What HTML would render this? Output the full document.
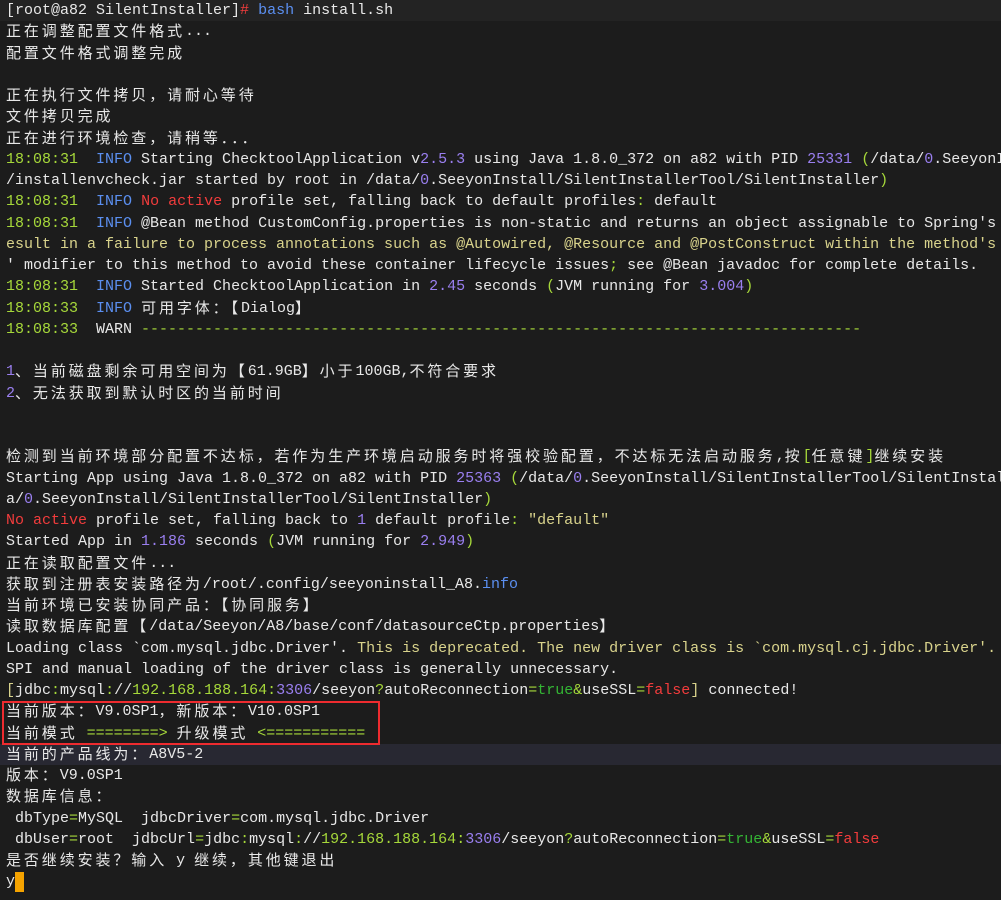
<!DOCTYPE html>
<html><head><meta charset="utf-8"><style>
html,body{margin:0;padding:0;background:#1c1c1c;width:1001px;height:900px;overflow:hidden}
#t{position:absolute;left:0;top:0;width:1001px;font-family:"Liberation Mono","Noto Sans CJK SC",monospace;font-size:15px;color:#e8e8e8}
.l{height:21.25px;line-height:21.25px;white-space:pre;padding-left:6px;overflow:hidden}
i{font-style:normal;letter-spacing:2.9px;font-family:"Noto Sans CJK SC","WenQuanYi Zen Hei",sans-serif;font-size:15px;line-height:1;vertical-align:baseline;position:relative;top:1px}
.g{color:#a6d83a}.b{color:#5b8ff0}.r{color:#f23c3c}.y{color:#d9d38c}.p{color:#9a7ff0}.gr{color:#34b534}
.hl{background:#282832}
.top{background:#232323}
#box{position:absolute;left:2px;top:701px;width:374px;height:40px;border:2px solid #ee2b2f}
#cur{position:absolute;left:15px;top:872px;width:9px;height:20px;background:#f5a300}
</style></head><body>
<div id="t">
<div class="l top">[root@a82 SilentInstaller]<span class="r">#</span> <span class="b">bash</span> install.sh</div>
<div class="l"><i>正在调整配置文件格式</i>...</div>
<div class="l"><i>配置文件格式调整完成</i></div>
<div class="l"> </div>
<div class="l"><i>正在执行文件拷贝，请耐心等待</i></div>
<div class="l"><i>文件拷贝完成</i></div>
<div class="l"><i>正在进行环境检查，请稍等．．．</i></div>
<div class="l"><span class="g">18:08:31</span>  <span class="b">INFO</span> Starting ChecktoolApplication v<span class="p">2.5.3</span> using Java 1.8.0_372 on a82 with PID <span class="p">25331</span> <span class="g">(</span>/data/<span class="p">0</span>.SeeyonInstall/SilentInstallerTool</div>
<div class="l">/installenvcheck.jar started by root in /data/<span class="p">0</span>.SeeyonInstall/SilentInstallerTool/SilentInstaller<span class="g">)</span></div>
<div class="l"><span class="g">18:08:31</span>  <span class="b">INFO</span> <span class="r">No active</span> profile set, falling back to default profiles<span class="g">:</span> default</div>
<div class="l"><span class="g">18:08:31</span>  <span class="b">INFO</span> @Bean method CustomConfig.properties is non-static and returns an object assignable to Spring's</div>
<div class="l y">esult in a failure to process annotations such as @Autowired, @Resource and @PostConstruct within the method's</div>
<div class="l">' modifier to this method to avoid these container lifecycle issues<span class="g">;</span> see @Bean javadoc for complete details.</div>
<div class="l"><span class="g">18:08:31</span>  <span class="b">INFO</span> Started ChecktoolApplication in <span class="p">2.45</span> seconds <span class="g">(</span>JVM running for <span class="p">3.004</span><span class="g">)</span></div>
<div class="l"><span class="g">18:08:33</span>  <span class="b">INFO</span> <i>可用字体：【</i>Dialog<i>】</i></div>
<div class="l"><span class="g">18:08:33</span>  WARN <span class="g">--------------------------------------------------------------------------------</span></div>
<div class="l"> </div>
<div class="l"><span class="p">1</span><i>、当前磁盘剩余可用空间为【</i>61.9GB<i>】小于</i>100GB,<i>不符合要求</i></div>
<div class="l"><span class="p">2</span><i>、无法获取到默认时区的当前时间</i></div>
<div class="l"> </div>
<div class="l"> </div>
<div class="l"><i>检测到当前环境部分配置不达标，若作为生产环境启动服务时将强校验配置，不达标无法启动服务</i>,<i>按</i><span class="g">[</span><i>任意键</i><span class="g">]</span><i>继续安装</i></div>
<div class="l">Starting App using Java 1.8.0_372 on a82 with PID <span class="p">25363</span> <span class="g">(</span>/data/<span class="p">0</span>.SeeyonInstall/SilentInstallerTool/SilentInstal</div>
<div class="l">a/<span class="p">0</span>.SeeyonInstall/SilentInstallerTool/SilentInstaller<span class="g">)</span></div>
<div class="l"><span class="r">No active</span> profile set, falling back to <span class="p">1</span> default profile<span class="g">:</span> <span class="y">"default"</span></div>
<div class="l">Started App in <span class="p">1.186</span> seconds <span class="g">(</span>JVM running for <span class="p">2.949</span><span class="g">)</span></div>
<div class="l"><i>正在读取配置文件</i>...</div>
<div class="l"><i>获取到注册表安装路径为</i>/root/.config/seeyoninstall_A8.<span class="b">info</span></div>
<div class="l"><i>当前环境已安装协同产品：【协同服务】</i></div>
<div class="l"><i>读取数据库配置【</i>/data/Seeyon/A8/base/conf/datasourceCtp.properties<i>】</i></div>
<div class="l">Loading class `com.mysql.jdbc.Driver'. <span class="y">This is deprecated. The new driver class is `com.mysql.cj.jdbc.Driver'.</span></div>
<div class="l">SPI and manual loading of the driver class is generally unnecessary.</div>
<div class="l"><span class="y">[</span>jdbc<span class="g">:</span>mysql<span class="g">:</span>//<span class="g">192.168.188.164</span><span class="g">:</span><span class="p">3306</span>/seeyon<span class="g">?</span>autoReconnection<span class="g">=</span><span class="gr">true</span><span class="g">&amp;</span>useSSL<span class="g">=</span><span class="r">false</span><span class="y">]</span> connected!</div>
<div class="l"><i>当前版本：</i>V9.0SP1<i>，新版本：</i>V10.0SP1</div>
<div class="l"><i>当前模式</i> <span class="g">========&gt;</span> <i>升级模式</i> <span class="g">&lt;===========</span></div>
<div class="l hl"><i>当前的产品线为：</i>A8V5-2</div>
<div class="l"><i>版本：</i>V9.0SP1</div>
<div class="l"><i>数据库信息：</i></div>
<div class="l"> dbType<span class="g">=</span>MySQL  jdbcDriver<span class="g">=</span>com.mysql.jdbc.Driver</div>
<div class="l"> dbUser<span class="g">=</span>root  jdbcUrl<span class="g">=</span>jdbc<span class="g">:</span>mysql<span class="g">:</span>//<span class="g">192.168.188.164</span><span class="g">:</span><span class="p">3306</span>/seeyon<span class="g">?</span>autoReconnection<span class="g">=</span><span class="gr">true</span><span class="g">&amp;</span>useSSL<span class="g">=</span><span class="r">false</span></div>
<div class="l"><i>是否继续安装？输入</i> y <i>继续，其他键退出</i></div>
<div class="l">y</div>
</div>
<div id="box"></div>
<div id="cur"></div>
</body></html>
